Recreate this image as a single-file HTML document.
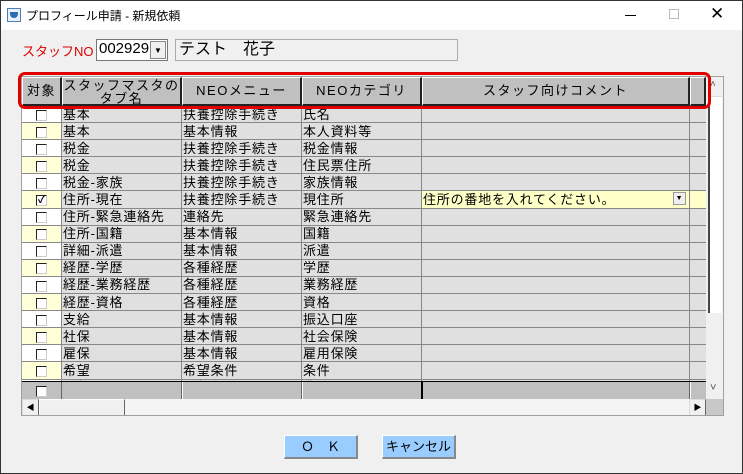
<!DOCTYPE html>
<html><head><meta charset="utf-8"><style>
*{box-sizing:border-box;margin:0;padding:0}
body{width:743px;height:474px;overflow:hidden;background:#f0f0f0;font-family:"Liberation Sans","Noto Sans CJK JP",sans-serif;font-size:13px;position:relative}
.win{position:absolute;left:0;top:0;width:743px;height:474px;border:1px solid #333;background:#f0f0f0}
.title{position:absolute;left:0;top:0;width:741px;height:29px;background:#fff}
.abs{position:absolute}
.grid{position:absolute;left:20px;top:75px;width:703px;height:340px;background:#fff;border:1px solid #a0a0a0;overflow:hidden}
table{border-collapse:collapse;table-layout:fixed;position:absolute;left:-1px;top:0}
td{height:17.1px;border:1px solid #888;background:#e0e0e0;padding:0 1px;white-space:nowrap;overflow:hidden;line-height:15px;font-size:13px;letter-spacing:0.8px}
td.c{background:#fff;text-align:center;padding:0}
tr:nth-child(even) td.c{background:#ffffd8}
.cb{display:inline-block;width:11px;height:11px;border:1px solid #222;border-right-color:#ccc;border-bottom-color:#ccc;background:#fff;vertical-align:middle;font-size:10px;line-height:9px;text-align:center;font-weight:bold;letter-spacing:0}
.hd{position:absolute;top:0;height:29px;background:#c0c0c0;border-top:1px solid #fff;border-left:1px solid #fff;border-right:2px solid #222;border-bottom:2px solid #222;text-align:center;font-size:13px;line-height:26px;letter-spacing:1.5px}
.btn{position:absolute;top:434px;height:24px;background:#99ccff;border:1px solid #fff;border-right:2px solid #888;border-bottom:2px solid #888;text-align:center;line-height:21px;font-size:13px}
</style></head><body><div class="win">
<div class="title">
<div class="abs" style="left:6px;top:7px;width:14px;height:14px;border:1px solid #4a7fb5;background:#e8f0fa"></div>
<div class="abs" style="left:9px;top:11px;width:8px;height:6px;background:#2a6db0;border-radius:0 0 4px 4px"></div>
<div class="abs" style="left:25px;top:6px;font-size:12px">プロフィール申請 - 新規依頼</div>
<div class="abs" style="left:624px;top:14px;width:11px;height:1px;background:#000"></div>
<div class="abs" style="left:668px;top:8px;width:10px;height:10px;border:1px solid #bbb"></div>
<div class="abs" style="left:709px;top:3px;font-size:17px;font-weight:300">✕</div>
</div>
<div class="abs" style="left:21px;top:40px;color:#e00000;font-size:13px">スタッフNO</div>
<div class="abs" style="left:95px;top:38px;width:72px;height:22px;background:#fff;border:1px solid #777"></div>
<div class="abs" style="left:98px;top:39px;font-size:15px">002929</div>
<div class="abs" style="left:149px;top:40px;width:16px;height:18px;background:#f0f0f0;border:1px solid #888;font-size:8px;text-align:center;line-height:17px">▼</div>
<div class="abs" style="left:174px;top:38px;width:283px;height:22px;background:#f0f0f0;border:1px solid #aaa;font-size:16px;padding-left:3px;line-height:19px">テスト　花子</div>

<div class="grid">
<table style="top:28px">
<colgroup><col style="width:40px"><col style="width:120px"><col style="width:120px"><col style="width:120px"><col style="width:268px"><col style="width:17px"></colgroup>
<tr><td class="c"><span class="cb"></span></td><td>基本</td><td>扶養控除手続き</td><td>氏名</td><td></td><td></td></tr>
<tr><td class="c"><span class="cb"></span></td><td>基本</td><td>基本情報</td><td>本人資料等</td><td></td><td></td></tr>
<tr><td class="c"><span class="cb"></span></td><td>税金</td><td>扶養控除手続き</td><td>税金情報</td><td></td><td></td></tr>
<tr><td class="c"><span class="cb"></span></td><td>税金</td><td>扶養控除手続き</td><td>住民票住所</td><td></td><td></td></tr>
<tr><td class="c"><span class="cb"></span></td><td>税金-家族</td><td>扶養控除手続き</td><td>家族情報</td><td></td><td></td></tr>
<tr><td class="c"><span class="cb">✓</span></td><td>住所-現在</td><td>扶養控除手続き</td><td>現住所</td><td style="background:#ffffc8;position:relative">住所の番地を入れてください。<span style="position:absolute;right:3px;top:1px;width:13px;height:13px;background:#f0f0f0;border:1px solid #999;font-size:7px;line-height:12px;text-align:center">▼</span></td><td style="background:#ffffc8"></td></tr>
<tr><td class="c"><span class="cb"></span></td><td>住所-緊急連絡先</td><td>連絡先</td><td>緊急連絡先</td><td></td><td></td></tr>
<tr><td class="c"><span class="cb"></span></td><td>住所-国籍</td><td>基本情報</td><td>国籍</td><td></td><td></td></tr>
<tr><td class="c"><span class="cb"></span></td><td>詳細-派遣</td><td>基本情報</td><td>派遣</td><td></td><td></td></tr>
<tr><td class="c"><span class="cb"></span></td><td>経歴-学歴</td><td>各種経歴</td><td>学歴</td><td></td><td></td></tr>
<tr><td class="c"><span class="cb"></span></td><td>経歴-業務経歴</td><td>各種経歴</td><td>業務経歴</td><td></td><td></td></tr>
<tr><td class="c"><span class="cb"></span></td><td>経歴-資格</td><td>各種経歴</td><td>資格</td><td></td><td></td></tr>
<tr><td class="c"><span class="cb"></span></td><td>支給</td><td>基本情報</td><td>振込口座</td><td></td><td></td></tr>
<tr><td class="c"><span class="cb"></span></td><td>社保</td><td>基本情報</td><td>社会保険</td><td></td><td></td></tr>
<tr><td class="c"><span class="cb"></span></td><td>雇保</td><td>基本情報</td><td>雇用保険</td><td></td><td></td></tr>
<tr><td class="c"><span class="cb"></span></td><td>希望</td><td>希望条件</td><td>条件</td><td></td><td></td></tr>
<tr><td class="c"><span class="cb"></span></td><td>希望</td><td>希望条件</td><td>業務</td><td></td><td></td></tr>
</table>
<div class="hd" style="left:0;width:40px">対象</div>
<div class="hd" style="left:40px;width:120px;line-height:13px;padding-top:1px">スタッフマスタの<br>タブ名</div>
<div class="hd" style="left:160px;width:120px">NEOメニュー</div>
<div class="hd" style="left:280px;width:120px">NEOカテゴリ</div>
<div class="hd" style="left:400px;width:268px">スタッフ向けコメント</div>
<div class="hd" style="left:668px;width:16px"></div>
<div class="abs" style="left:0;top:304px;width:684px;height:18px;background:#c0c0c0;border-top:1px solid #000"></div>
<div class="abs" style="left:0;top:305px;width:40px;height:17px;background:#c0c0c0;text-align:center;border-right:1px solid #666"><span class="cb" style="margin-top:2px"></span></div>
<div class="abs" style="left:159px;top:305px;width:2px;height:17px;background:#fff;border-left:1px solid #666"></div>
<div class="abs" style="left:279px;top:305px;width:2px;height:17px;background:#fff;border-left:1px solid #666"></div>
<div class="abs" style="left:399px;top:305px;width:2px;height:17px;background:#000"></div>
<div class="abs" style="left:667px;top:305px;width:2px;height:17px;background:#fff;border-left:1px solid #666"></div>
<div class="abs" style="left:684px;top:0;width:18px;height:322px;background:#f0f0f0"></div>
<div class="abs" style="left:688px;top:2px;font-size:10px;color:#555">˄</div>
<div class="abs" style="left:686px;top:19px;width:14px;height:217px;background:#fff;border-left:2px solid #444;border-top:1px solid #ddd"></div>
<div class="abs" style="left:688px;top:305px;font-size:11px;color:#555">˅</div>
<div class="abs" style="left:0;top:322px;width:684px;height:17px;background:#f4f4f4"></div>
<div class="abs" style="left:0;top:322px;width:17px;height:17px;background:#f0f0f0;border:1px solid #ddd;border-right-color:#666;border-bottom-color:#666;font-size:8px;text-align:center;line-height:15px">◀</div>
<div class="abs" style="left:17px;top:322px;width:86px;height:17px;background:#f0f0f0;border:1px solid #fff;border-right-color:#666;border-bottom-color:#666"></div>
<div class="abs" style="left:667px;top:322px;width:17px;height:17px;background:#f0f0f0;border:1px solid #ddd;border-right-color:#666;border-bottom-color:#666;font-size:8px;text-align:center;line-height:15px">▶</div>
<div class="abs" style="left:684px;top:322px;width:18px;height:17px;background:#c8c8c8"></div>
</div>
<div class="abs" style="left:17px;top:71px;width:693px;height:37px;border:3px solid #e00000;border-radius:7px"></div>
<div class="btn" style="left:283px;width:74px">Ｏ　Ｋ</div>
<div class="btn" style="left:381px;width:74px">キャンセル</div>
</div></body></html>
